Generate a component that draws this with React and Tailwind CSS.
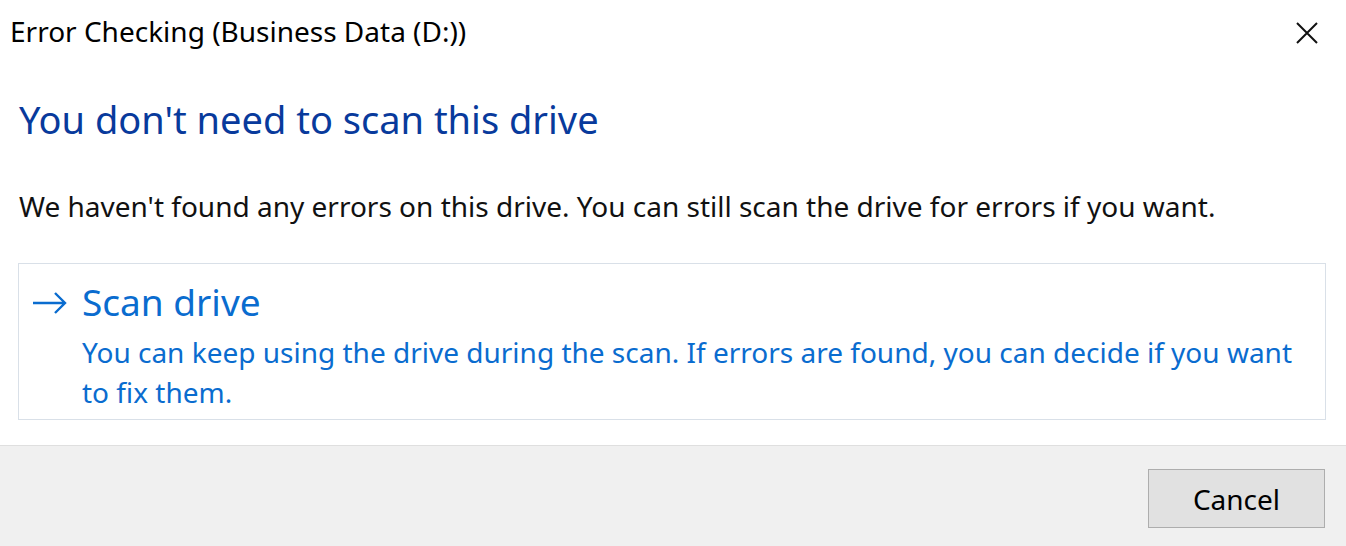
export default function App() {
  const font = { fontFamily: '"Noto Sans", "Open Sans", sans-serif' };
  return (
    <div className="w-[1346px] h-[546px] bg-white flex flex-col overflow-hidden" style={font}>
      <div className="flex-1 flex flex-col">
        <div className="h-[66px] flex items-start justify-between pl-[10px] pr-[28px] pt-[12px]">
          <div className="text-[28px] leading-[38px] text-black">Error Checking (Business Data (D:))</div>
          <svg width="22" height="22" viewBox="0 0 22 22" className="mt-[10px]">
            <path d="M1 1 L21 21 M21 1 L1 21" stroke="#111" strokeWidth="2" />
          </svg>
        </div>
        <div className="pl-[19px] pt-[28px] text-[38px] leading-[50px] text-[#083a9c]">You don't need to scan this drive</div>
        <div className="pl-[19px] pt-[44px] text-[28px] leading-[36px] text-[#111]">We haven't found any errors on this drive. You can still scan the drive for errors if you want.</div>
        <div className="ml-[18px] mr-[20px] mt-[39px] h-[157px] border border-[#d9e0e8] flex pl-[13px] pt-[14px]">
          <svg width="36" height="24" viewBox="0 0 36 24" className="mt-[13px]">
            <path d="M1 12 H33 M23 2 L33 12 L23 22" stroke="#0a6ccf" strokeWidth="2.4" fill="none" />
          </svg>
          <div className="ml-[14px] flex flex-col">
            <div className="text-[37px] leading-[48px] text-[#0a6ccf]">Scan drive</div>
            <div className="text-[28px] leading-[40px] text-[#0a6ccf] mt-[6px] w-[1230px]">You can keep using the drive during the scan. If errors are found, you can decide if you want to fix them.</div>
          </div>
        </div>
      </div>
      <div className="h-[101px] bg-[#f0f0f0] border-t border-[#dfdfdf] flex justify-end items-start pr-[21px] pt-[23px]">
        <button className="w-[177px] h-[59px] bg-[#e1e1e1] border border-[#adadad] text-[28px] text-black" style={font}>Cancel</button>
      </div>
    </div>
  );
}
